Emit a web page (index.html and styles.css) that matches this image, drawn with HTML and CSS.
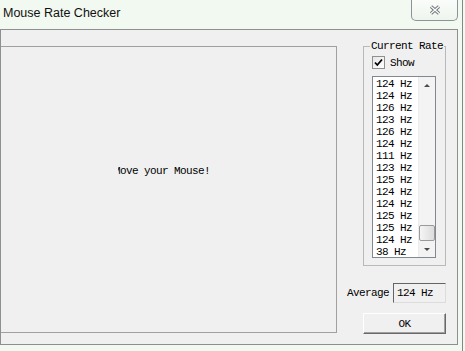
FILE: index.html
```html
<!DOCTYPE html>
<html lang="en">
<head>
  <meta charset="UTF-8" />
  <meta name="viewport" content="width=device-width, initial-scale=1.0" />
  <title>Mouse Rate Checker</title>
  <link rel="stylesheet" href="styles.css">
</head>
<body>
  <div class="window">
    <div class="titlebar">
      <span class="title">Mouse Rate Checker</span>
      <button class="close-btn">
        <svg width="12" height="10" viewBox="0 0 12 10">
          <path d="M2 1.5 L10 8.5 M10 1.5 L2 8.5" stroke="#6e7378" stroke-width="3.2" fill="none"/>
          <path d="M2 1.5 L10 8.5 M10 1.5 L2 8.5" stroke="#fbfbfb" stroke-width="1.4" fill="none"/>
        </svg>
      </button>
    </div>
    <div class="client">
      <div class="panel">
        <div class="msg"><span>Move your Mouse!</span></div>
      </div>
      <div class="side">
        <div class="group">
          <div class="group-title">Current Rate</div>
          <label class="check-row">
            <span class="check">
              <svg width="9" height="9" viewBox="0 0 9 9">
                <path d="M1 4.5 L3.3 7 L8 1.5" stroke="#000" stroke-width="1.8" fill="none"/>
              </svg>
            </span>
            Show
          </label>
          <div class="list">
            <div class="items" id="items"></div>
            <div class="scroll">
              <div class="scroll-btn"><span class="arrow-up"></span></div>
              <div class="scroll-track"></div>
              <div class="scroll-thumb"></div>
              <div class="scroll-btn down"><span class="arrow-down"></span></div>
            </div>
          </div>
        </div>
        <div class="avg-row">
          <span>Average</span>
          <div class="avg-box">124 Hz</div>
        </div>
        <button class="ok-btn">OK</button>
      </div>
    </div>
  </div>

  <script>
    const rates = [124, 124, 126, 123, 126, 124, 111, 123, 125, 124, 124, 125, 125, 124, 38];
    const itemsEl = document.getElementById('items');
    rates.forEach(r => {
      const row = document.createElement('div');
      row.className = 'item';
      row.textContent = r + ' Hz';
      itemsEl.appendChild(row);
    });
  </script>
</body>
</html>
```

FILE: styles.css
```css
body {
  margin: 0;
  background-color: #f1f9f0;
  font-family: "Liberation Mono", monospace;
  font-size: 11px;
  letter-spacing: -0.6px;
  color: #000;
}
.window {
  width: 462px;
  height: 351px;
  border-right: 1px solid #7d8a86;
}
.titlebar {
  height: 29px;
  display: flex;
  align-items: flex-start;
}
.title {
  font-family: "Liberation Sans", sans-serif;
  font-size: 12.5px;
  letter-spacing: 0;
  line-height: 16px;
  padding: 5px 0 0 3px;
  color: #111;
}
.close-btn {
  margin-left: auto;
  margin-right: 4px;
  width: 47px;
  height: 21px;
  padding: 0;
  border: 1px solid #8d9398;
  border-top: none;
  border-radius: 0 0 5px 5px;
  background: linear-gradient(#fafdfa, #eef4ee);
  display: flex;
  align-items: center;
  justify-content: center;
}
.client {
  width: 456px;
  height: 314px;
  border: 1px solid #8e908f;
  background-color: #f0f0f0;
  display: flex;
  align-items: flex-start;
}
.panel {
  box-sizing: border-box;
  width: 336px;
  height: 287px;
  margin-top: 16px;
  border: 1px solid #a0a0a0;
  border-left: none;
}
.msg {
  margin: 118px 0 0 117px;
  width: 100px;
  overflow: hidden;
  line-height: 12px;
  white-space: nowrap;
}
.msg span {
  display: block;
  margin-left: -4px;
}
.side {
  width: 83px;
  margin: 16px 0 0 26px;
  display: flex;
  flex-direction: column;
}
.group {
  box-sizing: border-box;
  height: 220px;
  border: 1px solid #b9b9b9;
  padding: 0 0 0 8px;
}
.group-title {
  width: fit-content;
  margin: -7px 0 0 -2px;
  padding: 0 1px;
  line-height: 12px;
  background-color: #f0f0f0;
}
.check-row {
  margin-top: 4px;
  display: flex;
  align-items: center;
  gap: 5px;
  height: 13px;
  line-height: 12px;
}
.check {
  box-sizing: border-box;
  width: 13px;
  height: 13px;
  border: 1px solid #8f8f8f;
  background: linear-gradient(135deg, #e6e6e6, #ffffff);
  display: flex;
  align-items: center;
  justify-content: center;
}
.list {
  box-sizing: border-box;
  margin-top: 7px;
  width: 64px;
  height: 182px;
  border: 1px solid #828790;
  background-color: #fff;
  display: flex;
}
.items {
  flex: 1;
  padding: 1px 0 0 3px;
}
.item {
  height: 12px;
  line-height: 12px;
  white-space: nowrap;
}
.scroll {
  width: 16px;
  display: flex;
  flex-direction: column;
  background-color: #f3f3f3;
  border-left: 1px solid #ececec;
}
.scroll-btn {
  height: 17px;
  display: flex;
  align-items: center;
  justify-content: center;
}
.scroll-btn.down {
  height: 16px;
}
.arrow-up {
  width: 0;
  height: 0;
  border-left: 3px solid transparent;
  border-right: 3px solid transparent;
  border-bottom: 3px solid #4a4a4a;
}
.arrow-down {
  width: 0;
  height: 0;
  border-left: 3px solid transparent;
  border-right: 3px solid transparent;
  border-top: 3px solid #4a4a4a;
}
.scroll-track {
  flex: 1;
}
.scroll-thumb {
  box-sizing: border-box;
  height: 16px;
  border: 1px solid #9a9a9a;
  border-radius: 2px;
  background: linear-gradient(90deg, #f5f5f5, #dcdcdc);
}
.avg-row {
  margin: 17px 0 0 -20px;
  display: flex;
  justify-content: flex-end;
  align-items: center;
  gap: 4px;
  line-height: 12px;
}
.avg-box {
  box-sizing: border-box;
  width: 53px;
  height: 20px;
  padding: 3px 0 0 3px;
  border: 1px solid #dcdcdc;
  border-top-color: #646464;
  border-left-color: #646464;
  background-color: #f0f0f0;
}
.ok-btn {
  box-sizing: border-box;
  margin-top: 10px;
  width: 83px;
  height: 21px;
  padding: 0;
  font-family: "Liberation Mono", monospace;
  font-size: 11px;
  letter-spacing: -0.6px;
  border: 1px solid #fff;
  border-right-color: #696969;
  border-bottom-color: #696969;
  box-shadow: inset -1px -1px 0 #a0a0a0;
  background-color: #f0f0f0;
}
```
